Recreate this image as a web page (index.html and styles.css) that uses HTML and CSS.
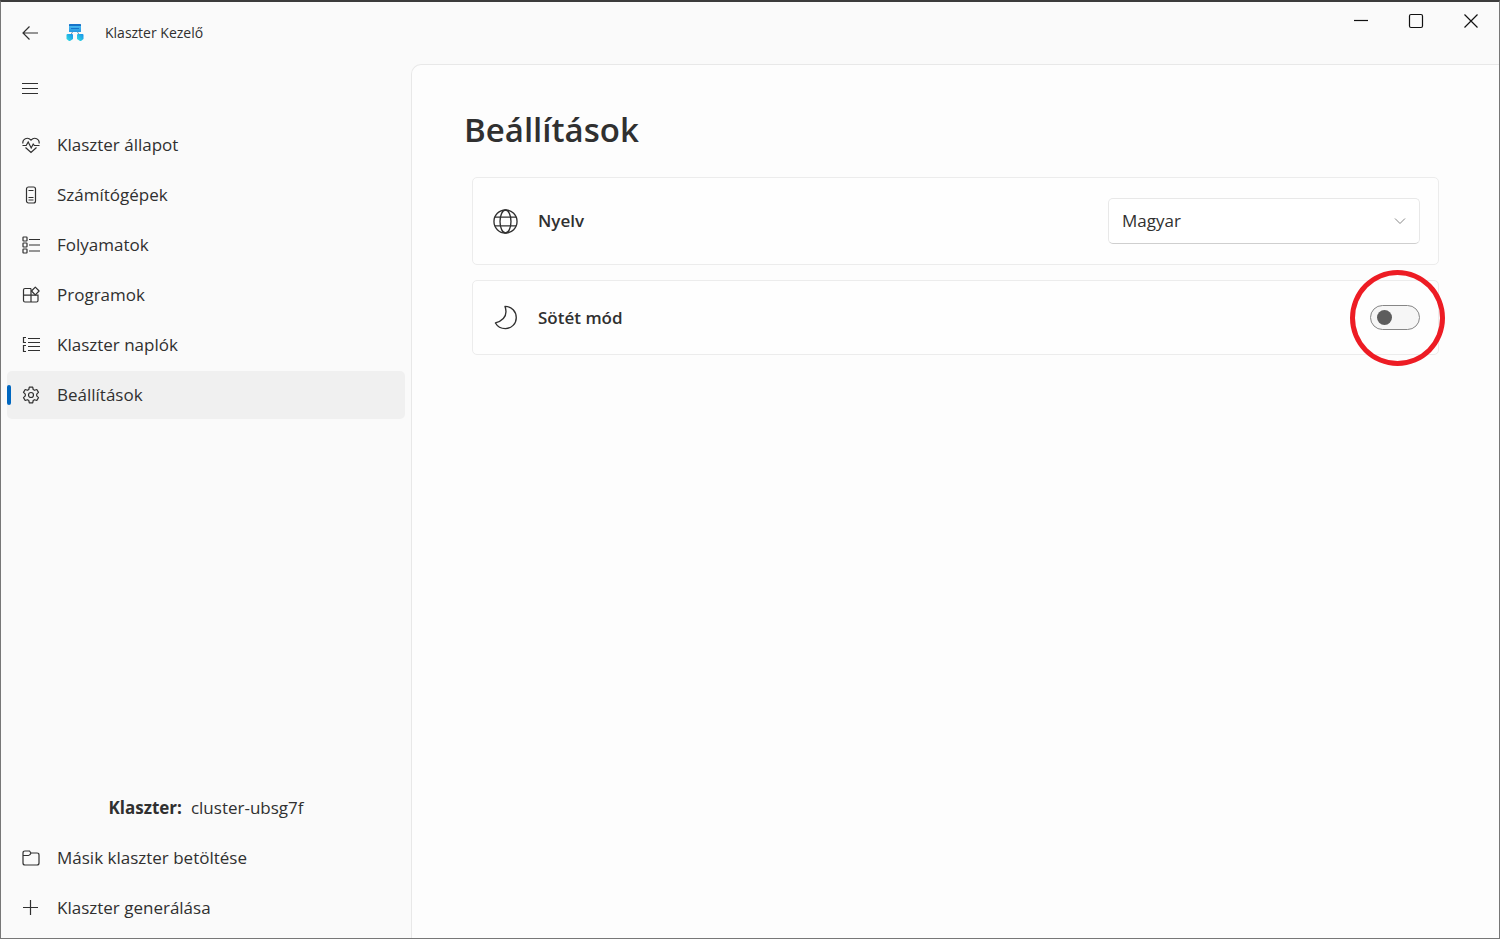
FILE: index.html
```html
<!DOCTYPE html>
<html lang="hu">
<head>
<meta charset="utf-8">
<meta name="viewport" content="width=device-width, initial-scale=1">
<title>Klaszter Kezelő</title>
<link rel="stylesheet" href="styles.css">
</head>
<body>
<div class="window">
  <header class="titlebar">
    <button class="icon-button" type="button" aria-label="Vissza">
      <svg class="icon" viewBox="0 0 18 18"><path d="M8.500 2.500 2 9l6.500 6.500M2 9h15"/></svg>
    </button>
    <svg class="logo" viewBox="0 0 18 18" aria-hidden="true">
      <defs>
        <linearGradient id="top" x1="0" y1="0" x2="0" y2="1"><stop offset="0" stop-color="#1673c9"/><stop offset=".2" stop-color="#1673c9"/><stop offset=".3" stop-color="#43b5ef"/><stop offset="1" stop-color="#2597df"/></linearGradient>
        <linearGradient id="node" x1="0" y1="1" x2="1" y2="0"><stop offset="0" stop-color="#35e3e0"/><stop offset="1" stop-color="#168eea"/></linearGradient>
      </defs>
      <path d="M6.500 8 5 10.500M11.500 8 13 10.500" stroke="#7793a6"/>
      <rect x="3" y="0" width="12" height="8" rx=".5" fill="url(#top)"/>
      <path d="M5 4.500h8" stroke="#1673c9"/>
      <path d="M1.500 10H6q1 0 1 1v4l-3 2h-1l-2.500-2v-4q0-1 1-1z" fill="url(#node)"/>
      <path d="M12 10h4.500q1 0 1 1v4l-2.500 2h-1l-3-2v-4q0-1 1-1z" fill="url(#node)"/>
    </svg>
    <span class="title">Klaszter Kezelő</span>
    <div class="window-controls">
      <button type="button" aria-label="Kis méret"><svg viewBox="0 0 16 16"><path d="M1 7.500h14"/></svg></button>
      <button type="button" aria-label="Teljes méret"><svg viewBox="0 0 16 16"><rect x="1.500" y="1.500" width="13" height="13" rx="1.500"/></svg></button>
      <button type="button" aria-label="Bezárás"><svg viewBox="0 0 16 16"><path d="m1.500 1.500 13 13m0-13-13 13"/></svg></button>
    </div>
  </header>

  <div class="body">
    <aside class="sidebar">
      <button class="icon-button menu-button" type="button" aria-label="Menü">
        <svg class="icon" viewBox="0 0 18 18"><path d="M1 4.500h16M1 9.500h16M1 14.500h16"/></svg>
      </button>
      <nav class="nav">
        <a class="nav-item" href="#allapot">
          <svg class="icon" viewBox="0 0 18 18"><path d="M1 7.500C-.1 3.200 5.500.2 9 4.200c3.500-4 9.100-1 8 3.300M3.500 11.500 9 16.500l5.500-5M.5 9.500h3.700l2-3.500 3 6 2-4 1.200 1.500h5.100"/></svg>
          Klaszter állapot</a>
        <a class="nav-item" href="#szamitogepek">
          <svg class="icon" viewBox="0 0 18 18"><rect x="4.500" y="1" width="9" height="16" rx="2"/><path d="M6.500 4.500h5M6.500 11.500h5M6.500 14h5"/></svg>
          Számítógépek</a>
        <a class="nav-item" href="#folyamatok">
          <svg class="icon" viewBox="0 0 18 18"><rect x="1" y="1" width="4" height="4" rx=".5"/><rect x="1" y="7" width="4" height="4" rx=".5"/><rect x="1" y="13" width="4" height="4" rx=".5"/><path d="M7 3.500h11M7 9h11M7 15h11"/></svg>
          Folyamatok</a>
        <a class="nav-item" href="#programok">
          <svg class="icon" viewBox="0 0 18 18"><path d="M9 2.500H3q-1.500 0-1.500 1.500v10.500Q1.500 16 3 16h11.500q1.500 0 1.500-1.500V9.200H1.500M9 2.500V16"/><path d="m13.300 1.200 3.800 3.800-3.800 3.800L9.500 5z" stroke-linejoin="round"/></svg>
          Programok</a>
        <a class="nav-item" href="#naplok">
          <svg class="icon" viewBox="0 0 18 18"><path d="M4 1.500H1.500v5H4M4 9.500H1.500v6H4M6 2.500h12M6 6.500h12M6 10.500h12M6 14.500h12"/></svg>
          Klaszter naplók</a>
        <a class="nav-item selected" href="#beallitasok" aria-current="page">
          <svg class="icon" viewBox="0 0 18 18"><path stroke-linejoin="round" d="M7.300 1.200h3.400l.5 2.300 1.300.8 2.300-.8 1.700 2.900-1.800 1.700v1.800l1.800 1.700-1.700 2.900-2.300-.8-1.300.8-.5 2.300H7.300l-.5-2.300-1.300-.8-2.300.8-1.700-2.900 1.800-1.700V8.100L1.500 6.400l1.700-2.900 2.300.8 1.300-.8z"/><circle cx="9" cy="9" r="2.500"/></svg>
          Beállítások</a>
      </nav>
      <p class="cluster"><strong>Klaszter:</strong><span>cluster-ubsg7f</span></p>
      <div class="nav nav-footer">
        <button class="nav-item" type="button">
          <svg class="icon" viewBox="0 0 18 18"><path d="M1 4v10q0 2 2 2h12q2 0 2-2V6q0-2-2-2H9L7.500 2H3Q1 2 1 4zM1 6.500h5.500Q8 6.500 9 4"/></svg>
          Másik klaszter betöltése</button>
        <button class="nav-item" type="button">
          <svg class="icon" viewBox="0 0 18 18"><path d="M8.500 1v15M1 8.500h15"/></svg>
          Klaszter generálása</button>
      </div>
    </aside>

    <main class="content">
      <h1>Beállítások</h1>
      <div class="cards">
        <section class="card">
          <svg class="card-icon" viewBox="0 0 26 26"><circle cx="13" cy="13" r="12"/><ellipse cx="13" cy="13" rx="5.700" ry="12"/><path d="M2 8.500h22M2 17.500h22"/></svg>
          <label for="language">Nyelv</label>
          <div class="select">
            <select id="language"><option>Magyar</option><option>English</option></select>
            <svg viewBox="0 0 12 12" aria-hidden="true"><path d="M1 3.500 6 8.500l5-5"/></svg>
          </div>
        </section>
        <section class="card">
          <svg class="card-icon" viewBox="0 0 26 26"><path stroke-linejoin="round" d="M12.500 1.500c7 0 11.700 5.300 11.700 11.700 0 6.300-5 11.300-11.300 11.300-4.700 0-8.400-2.300-10.400-5.800C9.500 16.500 13.500 12.500 13.500 7c0-2-.3-3.500-1-5.500z"/></svg>
          <label for="dark">Sötét mód</label>
          <div class="toggle">
            <input id="dark" type="checkbox" role="switch">
            <span class="highlight" aria-hidden="true"></span>
          </div>
        </section>
      </div>
    </main>
  </div>
</div>
</body>
</html>
```
FILE: styles.css
```css
* { box-sizing: border-box; }

body {
  margin: 0;
  color: #303030;
  font: 17px/24px "Open Sans", "Noto Sans", sans-serif;
}

button, select { font: inherit; color: inherit; }

button {
  padding: 0;
  border: 0;
  background: none;
}

svg {
  flex: none;
  fill: none;
  stroke: #303030;
}

.window {
  display: flex;
  flex-direction: column;
  min-height: 100vh;
  border: 1px solid #777;
  border-top: 2px solid #3c3c3c;
  background: #fafafa;
}

.titlebar {
  display: flex;
  align-items: center;
  height: 62px;
  padding-left: 4px;
}

.icon-button {
  display: grid;
  place-items: center;
  width: 50px;
  height: 48px;
}

.icon { width: 18px; height: 18px; stroke-width: 1.2; }

.logo { width: 18px; height: 18px; margin: 0 21px 0 11px; stroke: none; }

.title { font-size: 14px; }

.window-controls {
  display: flex;
  align-self: flex-start;
  margin: 0 1px 0 auto;
}

.window-controls button {
  display: grid;
  place-items: center;
  width: 55px;
  height: 38px;
}

.window-controls svg { width: 16px; height: 16px; stroke: #111; stroke-width: 1.2; }

.body { display: flex; flex: 1; }

.sidebar {
  display: flex;
  flex-direction: column;
  flex: none;
  width: 410px;
  padding: 0 6px 6px;
}

.menu-button { width: 46px; }

.nav {
  display: flex;
  flex-direction: column;
  gap: 2px;
  margin-top: 9px;
}

.nav-item {
  position: relative;
  display: flex;
  align-items: center;
  gap: 17px;
  height: 48px;
  padding-left: 15px;
  border-radius: 5px;
  color: inherit;
  text-decoration: none;
}

.selected { background: #f0f0f0; }

.selected::before {
  content: "";
  position: absolute;
  left: 0;
  width: 4px;
  height: 20px;
  border-radius: 2px;
  background: #0067c0;
}

.cluster {
  display: flex;
  justify-content: center;
  gap: 9px;
  margin: auto 0 14px;
}

.nav-footer { margin-top: 0; }

.content {
  flex: 1;
  min-width: 0;
  padding: 41px 52px;
  border: 1px solid #e8e8e8;
  border-width: 1px 0 0 1px;
  border-top-left-radius: 10px;
  background: #fdfdfd;
}

h1 {
  margin: 0;
  font-size: 33px;
  font-weight: 600;
  line-height: 48px;
}

.cards {
  display: grid;
  gap: 15px;
  margin-top: 23px;
  padding: 0 8px;
}

.card {
  display: flex;
  align-items: center;
  min-height: 75px;
  padding: 20px 18px 20px 20px;
  border: 1px solid #ececec;
  border-radius: 5px;
  background: #fefefe;
}

.card label { margin-left: 20px; font-weight: 600; }

.card-icon { width: 25px; height: 25px; stroke-width: 1.4; }

.select {
  display: grid;
  align-items: center;
  width: 312px;
  margin-left: auto;
}

.select select {
  grid-area: 1 / 1;
  height: 46px;
  padding: 0 40px 0 13px;
  border: 1px solid #e8e8e8;
  border-bottom-color: #cfcfcf;
  border-radius: 5px;
  appearance: none;
  background: #fff;
}

.select svg {
  grid-area: 1 / 1;
  justify-self: end;
  width: 12px;
  height: 12px;
  margin-right: 14px;
  stroke: #888;
  pointer-events: none;
}

.toggle {
  position: relative;
  display: flex;
  margin-left: auto;
}

.toggle input {
  display: flex;
  align-items: center;
  width: 50px;
  height: 25px;
  margin: 0;
  padding: 0 6px;
  border: 1px solid #868686;
  border-radius: 13px;
  appearance: none;
  background: #f6f6f6;
}

.toggle input::before {
  content: "";
  width: 15px;
  height: 15px;
  border-radius: 50%;
  background: #5d5d5d;
}

.toggle input:checked { justify-content: flex-end; }

.highlight {
  position: absolute;
  top: -35px;
  left: -20px;
  width: 95px;
  height: 96px;
  border: 5px solid #ed1c24;
  border-radius: 50%;
  pointer-events: none;
}
```
